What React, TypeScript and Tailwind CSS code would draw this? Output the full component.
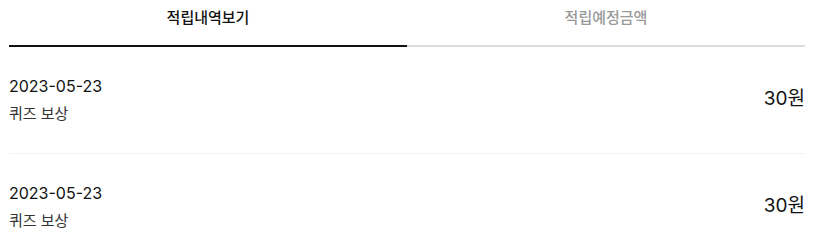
const items = [
  { date: '2023-05-23', label: '퀴즈 보상', amount: '30원' },
  { date: '2023-05-23', label: '퀴즈 보상', amount: '30원' },
];

export default function App() {
  return (
    <div
      className="bg-white w-[833px] h-[237px] overflow-hidden pl-[9px] pr-[28px]"
      style={{ fontFamily: 'Inter, "Noto Sans CJK KR", sans-serif' }}
    >
      {/* tabs */}
      <div className="flex">
        <button className="flex-1 h-[47px] pt-[7px] flex justify-center items-start border-b-2 border-[#111] text-[15px] leading-[22px] font-medium text-[#111]">
          적립내역보기
        </button>
        <button className="flex-1 h-[47px] pt-[7px] flex justify-center items-start border-b-2 border-[#dcdcdc] text-[15px] leading-[22px] font-medium text-[#999]">
          적립예정금액
        </button>
      </div>

      {/* list */}
      <ul>
        {items.map((item, i) => (
          <li
            key={i}
            className="flex items-center justify-between pt-[27px] pb-[29px] border-b border-[#f2f2f2]"
          >
            <div className="flex flex-col gap-[6px]">
              <span className="text-[16px] leading-[24px] text-[#111]">{item.date}</span>
              <span className="text-[15px] leading-[20px] text-[#333]">{item.label}</span>
            </div>
            <span className="text-[19px] leading-[26px] text-[#111]">{item.amount}</span>
          </li>
        ))}
      </ul>
    </div>
  );
}
